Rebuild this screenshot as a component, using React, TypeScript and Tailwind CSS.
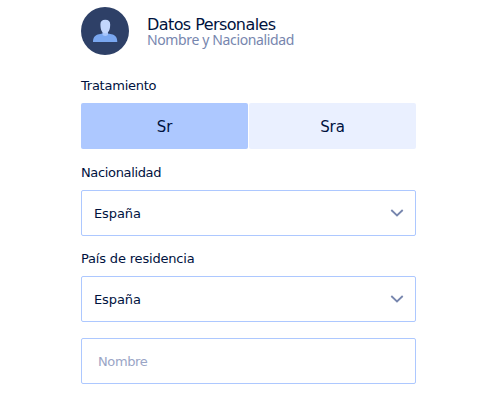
import React, { useState } from 'react';

const COUNTRIES = ['España'];

/**
 * Select field props
 */
interface SelectFieldProps {
  id: string;
  label: string;
  labelClassName: string;
}

/**
 * Round badge with a person drawn inside
 */
const Avatar: React.FC = () => (
  <svg className="size-12 shrink-0" viewBox="0 0 48 48" aria-hidden="true">
    <circle cx="24" cy="24" r="24" fill="#2e4067" />
    <path d="M12 35C12 30 14.500 27.800 18 27.200L21.500 26.400H27L30.500 27.200C34 27.800 36.300 30 36.300 35Z" fill="#7aa7f0" />
    <path d="M21.500 23H27V27.500C27 29.400 21.500 29.400 21.500 27.500Z" fill="#a9c6fb" />
    <path
      d="M24.300 12.700C27.600 12.700 29.300 14.500 29.200 17.500C29.100 22.500 27.900 26.200 24.300 26.200C20.700 26.200 19.500 22.500 19.400 17.500C19.300 14.500 21 12.700 24.300 12.700Z"
      fill="#c3d6fc"
    />
  </svg>
);

/**
 * Labelled country select
 */
const SelectField: React.FC<SelectFieldProps> = ({ id, label, labelClassName }) => (
  <div>
    <label htmlFor={id} className={`block h-[18px] text-[13px] leading-5 ${labelClassName}`}>
      {label}
    </label>
    <div className="relative mt-[9px]">
      <select
        id={id}
        className="block h-[46px] w-full appearance-none rounded-xs border border-[#adc8ff] bg-white px-3 pt-0.5 text-[13px] tracking-[-0.1px] outline-none"
      >
        {COUNTRIES.map((country) => (
          <option key={country}>{country}</option>
        ))}
      </select>
      <svg
        className="pointer-events-none absolute top-[19px] right-3 h-2 w-[14px]"
        viewBox="0 0 14 8"
        fill="none"
        stroke="#7786ae"
        strokeWidth="1.8"
      >
        <path d="M1.300 1l5.700 5.500L12.700 1" />
      </svg>
    </div>
  </div>
);

export default function App() {
  const [title, setTitle] = useState('Sr');

  return (
    <div className="h-[400px] bg-white pt-[7px] pl-[81px] font-['DejaVu_Sans',sans-serif] text-[#00123e]">
      <form className="w-[335px]">
        {/* Section header */}
        <div className="flex h-12 gap-[18px]">
          <Avatar />
          <div className="pt-2.5">
            <h2 className="text-base leading-4 tracking-[-0.58px] whitespace-nowrap">
              Datos Personales
            </h2>
            <p className="font-['Noto_Sans',sans-serif] text-sm leading-[14px] tracking-[-0.37px] whitespace-nowrap text-[#7786ae]">
              Nombre y Nacionalidad
            </p>
          </div>
        </div>

        {/* Title */}
        <p className="mt-[21px] h-[18px] text-[13px] leading-5 tracking-[-0.24px]">Tratamiento</p>
        <div className="mt-[9px] grid grid-cols-2 gap-px">
          {['Sr', 'Sra'].map((option) => (
            <button
              key={option}
              type="button"
              onClick={() => setTitle(option)}
              className={`h-[46px] rounded-xs pt-0.5 text-[15px] tracking-[-0.1px] ${
                title === option ? 'bg-[#adc8ff]' : 'bg-[#eaf0ff]'
              }`}
            >
              {option}
            </button>
          ))}
        </div>

        {/* Countries */}
        <div className="mt-[14px] flex flex-col gap-[13px]">
          <SelectField id="nationality" label="Nacionalidad" labelClassName="tracking-[-0.35px]" />
          <SelectField id="residence" label="País de residencia" labelClassName="tracking-[-0.18px]" />
        </div>

        <input
          type="text"
          placeholder="Nombre"
          className="mt-4 block h-[46px] w-full rounded-xs border border-[#adc8ff] px-4 text-[13px] tracking-[-0.4px] outline-none placeholder:text-[#9aa5c6]"
        />
      </form>
    </div>
  );
}
